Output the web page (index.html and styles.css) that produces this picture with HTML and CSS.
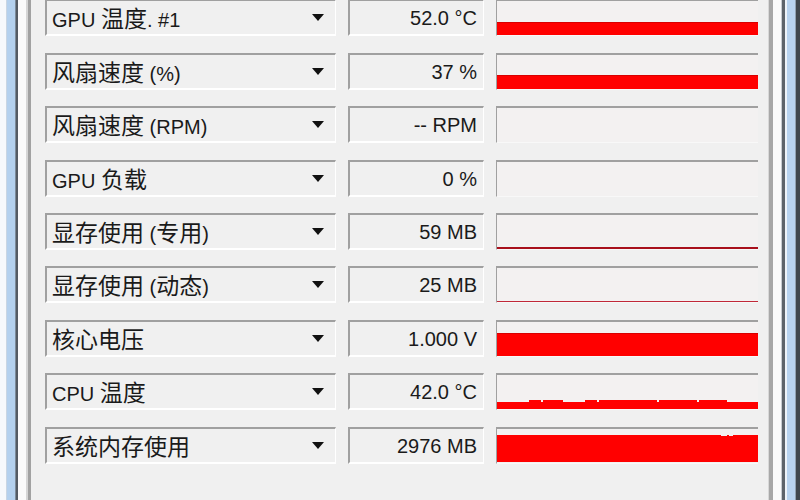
FILE: index.html
```html
<!DOCTYPE html>
<html lang="zh-CN">
<head>
<meta charset="utf-8">
<title>传感器</title>
<link rel="stylesheet" href="styles.css">
</head>
<body>
<div class="window">
  <div class="frame-left"></div>
  <div class="panel">
    <div class="sensors">
      <div class="row">
        <div class="name"><span class="label">GPU <span class="zh">温度</span>. #1</span><span class="arrow"></span></div>
        <div class="value">52.0 °C</div>
        <div class="graph"><div class="fill" style="height:13px"></div></div>
      </div>
      <div class="row">
        <div class="name"><span class="label"><span class="zh">风扇速度</span> (%)</span><span class="arrow"></span></div>
        <div class="value">37 %</div>
        <div class="graph"><div class="fill" style="height:14px"></div></div>
      </div>
      <div class="row">
        <div class="name"><span class="label"><span class="zh">风扇速度</span> (RPM)</span><span class="arrow"></span></div>
        <div class="value">-- RPM</div>
        <div class="graph"></div>
      </div>
      <div class="row">
        <div class="name"><span class="label">GPU <span class="zh">负载</span></span><span class="arrow"></span></div>
        <div class="value">0 %</div>
        <div class="graph"></div>
      </div>
      <div class="row">
        <div class="name"><span class="label"><span class="zh">显存使用</span> (<span class="zh">专用</span>)</span><span class="arrow"></span></div>
        <div class="value">59 MB</div>
        <div class="graph"><div class="fill line" style="height:2px"></div></div>
      </div>
      <div class="row">
        <div class="name"><span class="label"><span class="zh">显存使用</span> (<span class="zh">动态</span>)</span><span class="arrow"></span></div>
        <div class="value">25 MB</div>
        <div class="graph"><div class="fill line thin" style="height:1px"></div></div>
      </div>
      <div class="row">
        <div class="name"><span class="label"><span class="zh">核心电压</span></span><span class="arrow"></span></div>
        <div class="value">1.000 V</div>
        <div class="graph"><div class="fill" style="height:23px"></div></div>
      </div>
      <div class="row">
        <div class="name"><span class="label">CPU <span class="zh">温度</span></span><span class="arrow"></span></div>
        <div class="value">42.0 °C</div>
        <div class="graph">
          <svg class="plot" viewBox="0 0 261 34" preserveAspectRatio="none">
            <path fill="#ff0000" d="M0 27 H32 V25 H44 V27 H46 V25 H66 V27 H88 V25 H100 V27 H102 V25 H160 V27 H162 V25 H200 V27 H202 V25 H230 V27 H261 V34 H0 Z"/>
          </svg>
        </div>
      </div>
      <div class="row">
        <div class="name"><span class="label"><span class="zh">系统内存使用</span></span><span class="arrow"></span></div>
        <div class="value">2976 MB</div>
        <div class="graph">
          <svg class="plot" viewBox="0 0 261 34" preserveAspectRatio="none">
            <path fill="#ff0000" d="M0 6 H224 V7 H230 V6 H232 V7 H236 V6 H261 V33 H0 Z"/>
          </svg>
        </div>
      </div>
    </div>
  </div>
  <div class="frame-right"></div>
</div>
</body>
</html>
```

FILE: styles.css
```css
html, body {
  margin: 0;
  padding: 0;
}

body {
  width: 800px;
  height: 500px;
  overflow: hidden;
  background: #f0f0f0;
  color: #1a1a1a;
  font-family: "Liberation Sans", "Noto Sans CJK SC", sans-serif;
  font-size: 20px;
}

.window {
  display: flex;
  height: 500px;
}

/* window chrome + tab border, left side */
.frame-left {
  flex: none;
  width: 31px;
  background: linear-gradient(to right,
    #f6f9fc 0 6px,
    #c9d6e3 6px 7px,
    #b4d1ee 7px 15px,
    #7d8b99 15px 16px,
    #545b63 16px 18px,
    #fbfbfb 18px 26px,
    #d6d6d6 26px 28px,
    #a2a2a2 28px 31px);
}

/* window chrome + tab border, right side */
.frame-right {
  flex: none;
  width: 32px;
  background: linear-gradient(to right,
    #d8d8d8 0 1px,
    #a8a8a8 1px 5px,
    #fbfbfb 5px 13px,
    #c8ccd0 13px 14px,
    #5e646a 14px 17px,
    #eef3f8 17px 19px,
    #b8d3ef 19px 27px,
    #90a0b0 27px 28px,
    #3f464d 28px 32px);
}

.panel {
  flex: 1;
  padding: 0 10px 0 14px;
  background: #f0f0f0;
}

.sensors {
  display: flex;
  flex-direction: column;
  gap: 16.4px;
  margin-top: -0.6px;
}

.row {
  display: flex;
  gap: 12px;
  height: 37px;
}

.name,
.value {
  box-sizing: border-box;
  height: 37px;
  border-top: 2px solid #a0a0a0;
  border-left: 2px solid #a0a0a0;
  border-right: 1px solid #ffffff;
  border-bottom: 2px solid #ffffff;
  display: flex;
  align-items: center;
  line-height: 1;
  white-space: nowrap;
}

.name {
  width: 291px;
  padding: 0 11px 0 5px;
  justify-content: space-between;
}

.label {
  padding-top: 1px;
}

.zh {
  font-family: "Noto Sans CJK SC", sans-serif;
  font-size: 23px;
}

/* dropdown triangle */
.arrow {
  width: 0;
  height: 0;
  border-left: 6.5px solid transparent;
  border-right: 6.5px solid transparent;
  border-top: 7px solid #111;
}

.value {
  width: 136px;
  padding: 1px 6px 0 0;
  justify-content: flex-end;
}

.graph {
  box-sizing: border-box;
  width: 262px;
  height: 37px;
  border-top: 2px solid #a0a0a0;
  border-left: 1px solid #a0a0a0;
  border-bottom: 1px solid #f8f8f8;
  background: #f3f1f1;
  display: flex;
  flex-direction: column;
  justify-content: flex-end;
}

.fill {
  background: #ff0000;
  box-shadow: inset 0 1px 0 #d80000;
}

.fill.line {
  background: #a8101c;
  box-shadow: none;
}

.fill.line.thin {
  background: #c02838;
}

.plot {
  display: block;
  width: 261px;
  height: 34px;
}
```
